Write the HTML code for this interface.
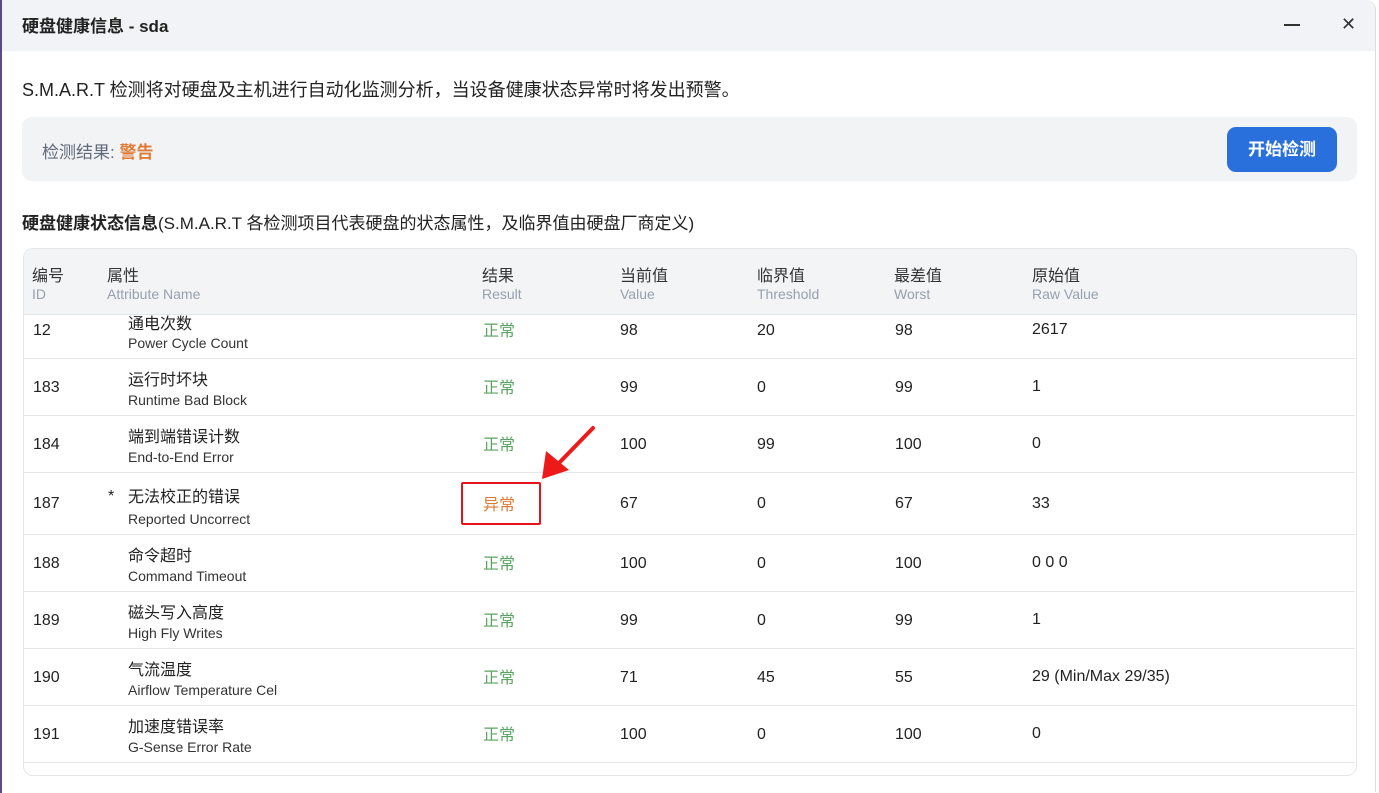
<!DOCTYPE html>
<html><head><meta charset="utf-8"><style>
*{margin:0;padding:0;box-sizing:border-box}
body{width:1379px;height:793px;background:#fff;position:relative;overflow:hidden;font-family:"Liberation Sans","Noto Sans CJK SC",sans-serif;color:#222}
.a{position:absolute;white-space:nowrap}
.dlg{position:absolute;left:1px;top:0;width:1375px;height:792px;background:#fff;border-right:1px solid #ddd;border-radius:0 10px 0 0;overflow:hidden}
.edge{position:absolute;left:0;top:0;width:2px;height:793px;background:#5a4a8a}
.title{position:absolute;left:0;top:0;width:100%;height:51px;background:#f1f3f7}
.box{position:absolute;left:21px;top:117px;width:1335px;height:64px;background:#f2f3f5;border-radius:10px}
.btn{position:absolute;left:1226px;top:127px;width:110px;height:45px;background:#2a70dd;border-radius:9px;color:#fff;font-weight:bold;font-size:17px;text-align:center;line-height:45px}
.tbl{position:absolute;left:22px;top:248px;width:1334px;height:528px;border:1px solid #e3e5e8;border-radius:10px;overflow:hidden}
.th{position:absolute;left:0;top:0;width:100%;height:66px;background:#f3f4f6;border-bottom:1px solid #e3e5e8}
.hc{font-size:16px;color:#333}
.he{font-size:14px;color:#98a0ad}
.line{position:absolute;left:0;width:100%;height:1px;background:#e6e7ea}
.cn{font-size:16px;color:#222;margin-top:-2px}
.en{font-size:14px;color:#333}
.v{font-size:16px;color:#222}
.ok{font-size:16px;color:#5aa362;margin-top:-3px}
.bad{font-size:16px;color:#e07b36;margin-top:-3px}
</style></head><body>
<div class="dlg">
<div class="title"></div>
<div class="a" style="left:21px;top:12px;font-size:17px;font-weight:bold;color:#222">硬盘健康信息 - sda</div>
<div class="a" style="left:1283px;top:24px;width:16px;height:2px;background:#333"></div>
<div class="a" style="left:1340px;top:14px;font-size:18px;color:#333">✕</div>
<div class="a" style="left:21px;top:76px;font-size:18px;color:#222">S.M.A.R.T 检测将对硬盘及主机进行自动化监测分析，当设备健康状态异常时将发出预警。</div>
<div class="box"></div>
<div class="a" style="left:41px;top:138px;font-size:17px;color:#5f6b7a">检测结果: <b style="color:#e07b36">警告</b></div>
<div class="btn">开始检测</div>
<div class="a" style="left:21px;top:209px;font-size:17px;color:#222"><b>硬盘健康状态信息</b>(S.M.A.R.T 各检测项目代表硬盘的状态属性，及临界值由硬盘厂商定义)</div>
<div class="tbl">
<div class="th"></div>
</div>
</div>
<div class="edge"></div>
<div class="a hc" style="left:32px;top:262px">编号</div><div class="a he" style="left:32px;top:286px">ID</div>
<div class="a hc" style="left:107px;top:262px">属性</div><div class="a he" style="left:107px;top:286px">Attribute Name</div>
<div class="a hc" style="left:482px;top:262px">结果</div><div class="a he" style="left:482px;top:286px">Result</div>
<div class="a hc" style="left:620px;top:262px">当前值</div><div class="a he" style="left:620px;top:286px">Value</div>
<div class="a hc" style="left:757px;top:262px">临界值</div><div class="a he" style="left:757px;top:286px">Threshold</div>
<div class="a hc" style="left:894px;top:262px">最差值</div><div class="a he" style="left:894px;top:286px">Worst</div>
<div class="a hc" style="left:1032px;top:262px">原始值</div><div class="a he" style="left:1032px;top:286px">Raw Value</div>
<div class="line a" style="left:23px;width:1332px;top:358px"></div>
<div class="line a" style="left:23px;width:1332px;top:415px"></div>
<div class="line a" style="left:23px;width:1332px;top:472px"></div>
<div class="line a" style="left:23px;width:1332px;top:534px"></div>
<div class="line a" style="left:23px;width:1332px;top:591px"></div>
<div class="line a" style="left:23px;width:1332px;top:648px"></div>
<div class="line a" style="left:23px;width:1332px;top:705px"></div>
<div class="line a" style="left:23px;width:1332px;top:762px"></div>
<div class="a v" style="left:33px;top:322px">12</div><div class="a cn" style="left:128px;top:312px">通电次数</div><div class="a en" style="left:128px;top:335px">Power Cycle Count</div><div class="a ok" style="left:483px;top:320px">正常</div><div class="a v" style="left:620px;top:322px">98</div><div class="a v" style="left:757px;top:322px">20</div><div class="a v" style="left:895px;top:322px">98</div><div class="a v" style="left:1032px;top:321px">2617</div>
<div class="a v" style="left:33px;top:379px">183</div><div class="a cn" style="left:128px;top:368px">运行时坏块</div><div class="a en" style="left:128px;top:392px">Runtime Bad Block</div><div class="a ok" style="left:483px;top:377px">正常</div><div class="a v" style="left:620px;top:379px">99</div><div class="a v" style="left:757px;top:379px">0</div><div class="a v" style="left:895px;top:379px">99</div><div class="a v" style="left:1032px;top:378px">1</div>
<div class="a v" style="left:33px;top:436px">184</div><div class="a cn" style="left:128px;top:425px">端到端错误计数</div><div class="a en" style="left:128px;top:449px">End-to-End Error</div><div class="a ok" style="left:483px;top:434px">正常</div><div class="a v" style="left:620px;top:436px">100</div><div class="a v" style="left:757px;top:436px">99</div><div class="a v" style="left:895px;top:436px">100</div><div class="a v" style="left:1032px;top:435px">0</div>
<div class="a v" style="left:33px;top:495px">187</div><div class="a v" style="left:108px;top:488px">*</div><div class="a cn" style="left:128px;top:485px">无法校正的错误</div><div class="a en" style="left:128px;top:511px">Reported Uncorrect</div><div class="a bad" style="left:483px;top:494px">异常</div><div class="a v" style="left:620px;top:495px">67</div><div class="a v" style="left:757px;top:495px">0</div><div class="a v" style="left:895px;top:495px">67</div><div class="a v" style="left:1032px;top:495px">33</div>
<div class="a v" style="left:33px;top:555px">188</div><div class="a cn" style="left:128px;top:544px">命令超时</div><div class="a en" style="left:128px;top:568px">Command Timeout</div><div class="a ok" style="left:483px;top:553px">正常</div><div class="a v" style="left:620px;top:555px">100</div><div class="a v" style="left:757px;top:555px">0</div><div class="a v" style="left:895px;top:555px">100</div><div class="a v" style="left:1032px;top:554px">0 0 0</div>
<div class="a v" style="left:33px;top:612px">189</div><div class="a cn" style="left:128px;top:601px">磁头写入高度</div><div class="a en" style="left:128px;top:625px">High Fly Writes</div><div class="a ok" style="left:483px;top:610px">正常</div><div class="a v" style="left:620px;top:612px">99</div><div class="a v" style="left:757px;top:612px">0</div><div class="a v" style="left:895px;top:612px">99</div><div class="a v" style="left:1032px;top:611px">1</div>
<div class="a v" style="left:33px;top:669px">190</div><div class="a cn" style="left:128px;top:658px">气流温度</div><div class="a en" style="left:128px;top:682px">Airflow Temperature Cel</div><div class="a ok" style="left:483px;top:667px">正常</div><div class="a v" style="left:620px;top:669px">71</div><div class="a v" style="left:757px;top:669px">45</div><div class="a v" style="left:895px;top:669px">55</div><div class="a v" style="left:1032px;top:668px">29 (Min/Max 29/35)</div>
<div class="a v" style="left:33px;top:726px">191</div><div class="a cn" style="left:128px;top:715px">加速度错误率</div><div class="a en" style="left:128px;top:739px">G-Sense Error Rate</div><div class="a ok" style="left:483px;top:724px">正常</div><div class="a v" style="left:620px;top:726px">100</div><div class="a v" style="left:757px;top:726px">0</div><div class="a v" style="left:895px;top:726px">100</div><div class="a v" style="left:1032px;top:725px">0</div>
<div class="a" style="left:128px;top:768px;height:8px;overflow:hidden"><div class="cn" style="margin-top:4px">顺序扇区计数</div></div>
<div class="a" style="left:461px;top:482px;width:80px;height:43px;border:2px solid #e8141c;border-radius:2px"></div>
<svg class="a" style="left:530px;top:420px" width="75" height="70" viewBox="530 420 75 70">
<line x1="593" y1="428" x2="558" y2="464" stroke="#ee1a1a" stroke-width="4" stroke-linecap="round"/>
<polygon points="542,479 546,451 569,470" fill="#ee1a1a"/>
</svg>
</body></html>
